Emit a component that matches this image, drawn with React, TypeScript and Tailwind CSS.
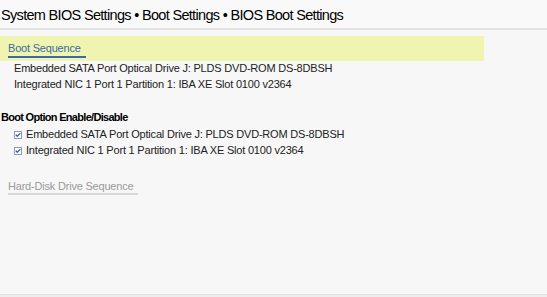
import React from 'react';

const bootSequence = [
  'Embedded SATA Port Optical Drive J: PLDS DVD-ROM DS-8DBSH',
  'Integrated NIC 1 Port 1 Partition 1: IBA XE Slot 0100 v2364',
];

function Check() {
  return (
    <span className="inline-flex h-[8px] w-[8px] items-center justify-center border border-[#8f9bb0] bg-white">
      <svg viewBox="0 0 8 8" className="h-[8px] w-[8px]">
        <path d="M1 3.6 L3 5.9 L7 1.4" fill="none" stroke="#2a4fc0" strokeWidth="1.5" />
      </svg>
    </span>
  );
}

export default function App() {
  return (
    <div
      className="flex h-[297px] w-[547px] flex-col overflow-hidden bg-[#f7f7f7] text-[11px] tracking-[-0.2px] text-[#222]"
      style={{ fontFamily: '"Liberation Sans", Arial, sans-serif' }}
    >
      {/* Title bar */}
      <header className="flex h-[30px] items-center border-b-2 border-[#e4e4e4] bg-[#f9f9f9] pl-px pt-[3px] text-[14.5px] tracking-[-0.68px] text-black">
        System BIOS Settings • Boot Settings • BIOS Boot Settings
      </header>

      <main className="flex-1 pt-[6px]">
        {/* Selected item */}
        <div className="flex h-[25px] w-[484px] items-start bg-[#eff5b0] pl-2 pt-[6px]">
          <span className="border-b-2 border-[#3b6aa5] pb-[1px] pr-[5px] leading-[13px] text-[#3b6aa5]">
            Boot Sequence
          </span>
        </div>

        <div className="flex flex-col gap-[3px] pl-[14px] pt-[1px]">
          {bootSequence.map((item) => (
            <div key={item} className="leading-[13px]">
              {item}
            </div>
          ))}
        </div>

        <div className="pl-px pt-[20px] font-bold leading-[13px] tracking-[-0.7px] text-black">
          Boot Option Enable/Disable
        </div>

        <div className="flex flex-col gap-[3px] pl-[14px] pt-[4px]">
          {bootSequence.map((item) => (
            <label key={item} className="flex items-center gap-[4px] leading-[13px]">
              <Check />
              {item}
            </label>
          ))}
        </div>

        <div className="pl-2 pt-[21px]">
          <span className="inline-block border-b-2 border-[#d8d8d8] pr-[5px] leading-[13px] text-[#9a9a9a]">
            Hard-Disk Drive Sequence
          </span>
        </div>
      </main>

      <footer className="h-[3px] border-t border-[#e2e2e2] bg-[#eeeeee]" />
    </div>
  );
}
